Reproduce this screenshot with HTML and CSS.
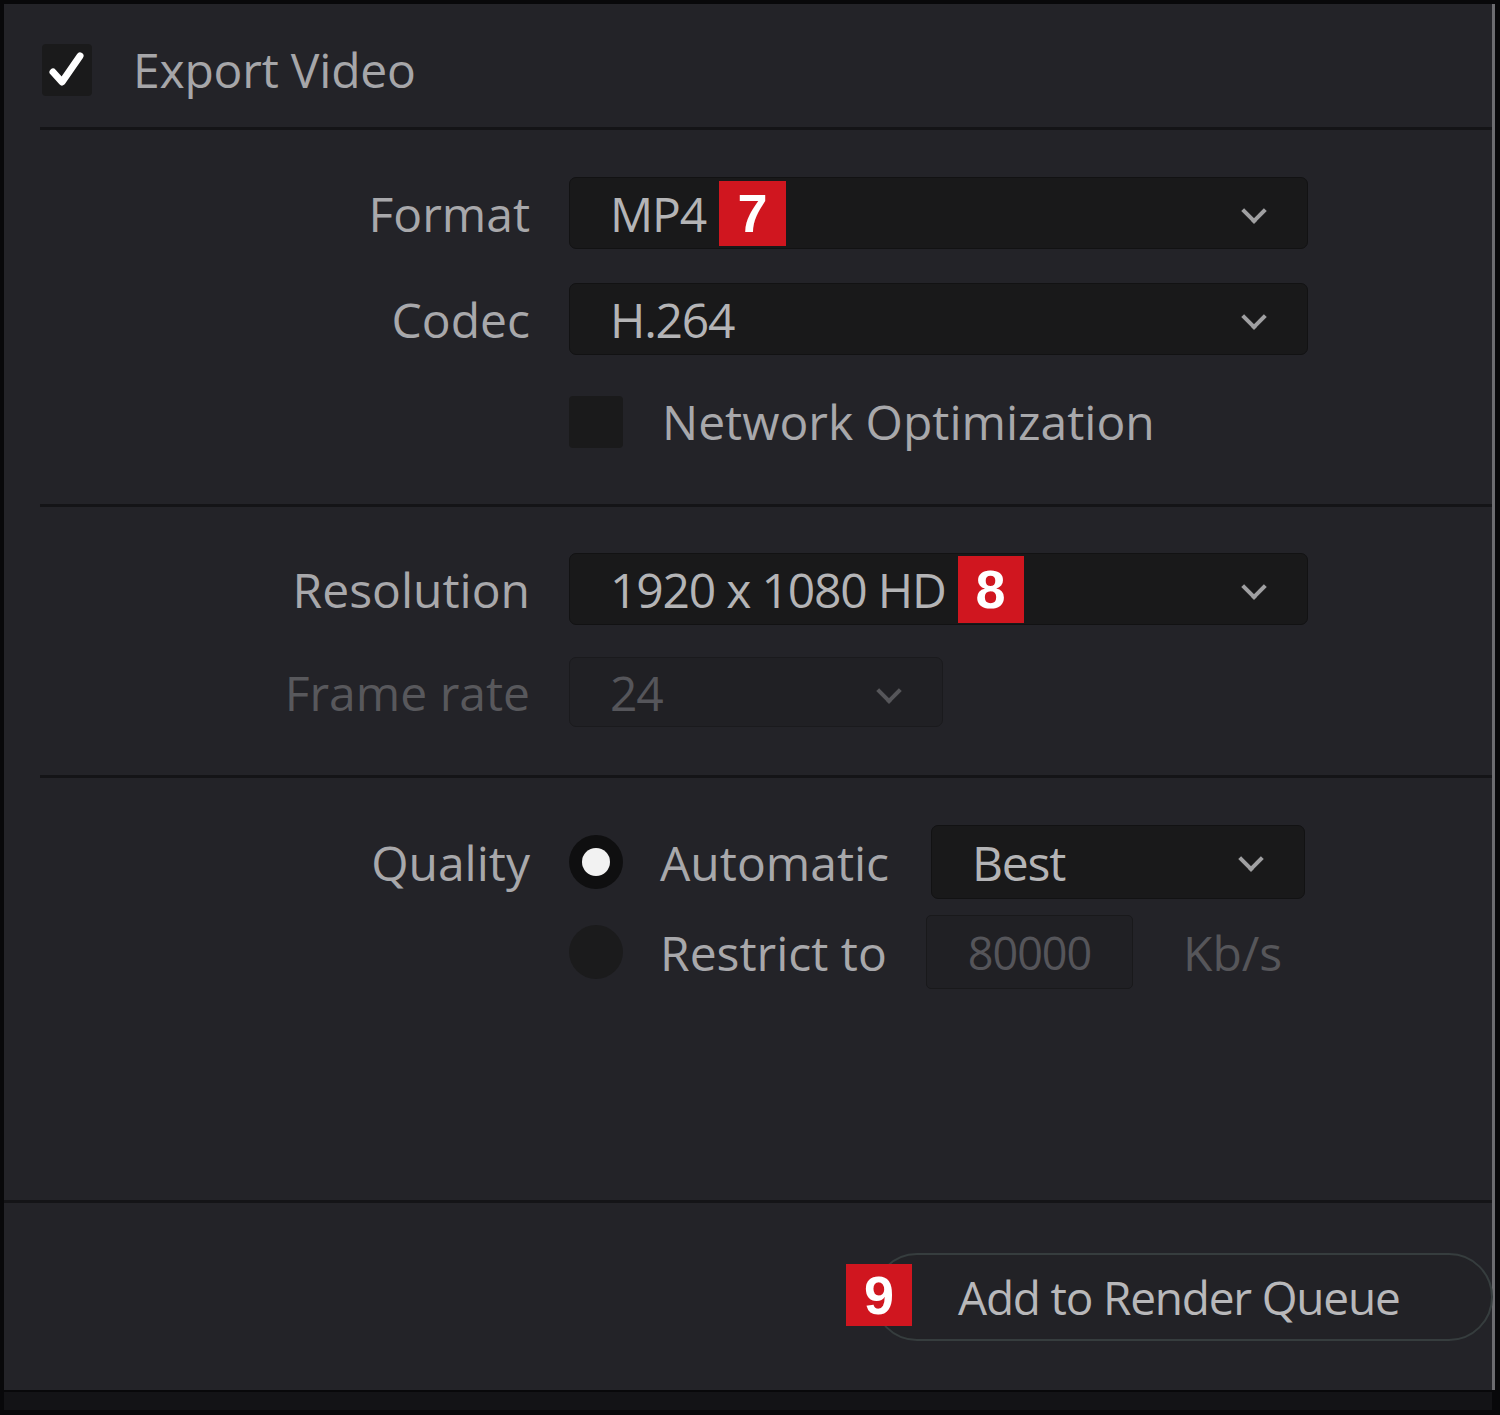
FILE: index.html
```html
<!DOCTYPE html>
<html>
<head>
<meta charset="utf-8">
<link rel="stylesheet" href="styles.css">
</head>
<body>
<div class="frame">
  <div class="panel">
    <div class="header">
      <span class="check on">
        <svg viewBox="0 0 50 50" width="50" height="50"><path d="M11 27 L20 37 L38 11" fill="none" stroke="#fff" stroke-width="7" stroke-linecap="round" stroke-linejoin="round"/></svg>
      </span>
      <span class="title">Export Video</span>
    </div>
    <div class="divider inset"></div>

    <div class="section s1">
      <div class="row">
        <div class="label">Format</div>
        <div class="select wide"><span class="val">MP4</span><span class="badge">7</span><span class="chev"></span></div>
      </div>
      <div class="row">
        <div class="label">Codec</div>
        <div class="select wide"><span class="val">H.264</span><span class="chev"></span></div>
      </div>
      <div class="row">
        <div class="label"></div>
        <div class="opt"><span class="check small"></span><span class="opttext">Network Optimization</span></div>
      </div>
    </div>
    <div class="divider inset"></div>

    <div class="section s2">
      <div class="row">
        <div class="label">Resolution</div>
        <div class="select wide"><span class="val">1920 x 1080 HD</span><span class="badge b8">8</span><span class="chev"></span></div>
      </div>
      <div class="row">
        <div class="label dim">Frame rate</div>
        <div class="select narrow disabled"><span class="val">24</span><span class="chev"></span></div>
      </div>
    </div>
    <div class="divider inset"></div>

    <div class="section s3">
      <div class="row">
        <div class="label">Quality</div>
        <div class="opt">
          <span class="radio on"></span><span class="opttext q">Automatic</span>
          <div class="select best"><span class="val">Best</span><span class="chev"></span></div>
        </div>
      </div>
      <div class="row">
        <div class="label"></div>
        <div class="opt">
          <span class="radio"></span><span class="opttext q">Restrict to</span>
          <div class="input">80000</div>
          <span class="unit">Kb/s</span>
        </div>
      </div>
    </div>
    <div class="divider full"></div>

    <div class="footer">
      <div class="btnwrap">
        <span class="badge b9">9</span>
        <div class="btn">Add to Render Queue</div>
      </div>
    </div>
  </div>
  <div class="bottomstrip"></div>
</div>
</body>
</html>
```

FILE: styles.css
```css
html, body {
  margin: 0;
  padding: 0;
  background: #08080a;
}
body {
  width: 1500px;
  height: 1415px;
  overflow: hidden;
  font-family: "Open Sans", "Noto Sans", sans-serif;
}
.frame {
  padding: 4px 0 0 4px;
  width: 1496px;
}
.panel {
  width: 1488px;
  height: 1386px;
  background: #232328;
  border-right: 3px solid #6c6c70;
  display: flex;
  flex-direction: column;
}
.bottomstrip {
  width: 1488px;
  height: 18px;
  margin-top: 2px;
  background: #131316;
}
.header {
  height: 123px;
  display: flex;
  align-items: center;
  padding-left: 38px;
  box-sizing: border-box;
  padding-top: 8px;
}
.check {
  display: inline-flex;
  width: 50px;
  height: 52px;
  background: #1a1a1b;
  border-radius: 4px;
  align-items: center;
  justify-content: center;
  flex: none;
}
.title {
  margin-left: 41px;
  font-size: 48px;
  color: #a6a6a9;
  letter-spacing: -0.2px;
}
.divider {
  height: 3px;
  background: #141417;
  flex: none;
}
.divider.inset { margin-left: 36px; }
.divider.full { margin-left: 0; }

.section {
  display: flex;
  flex-direction: column;
  box-sizing: border-box;
}
.s1 { height: 374px; padding-top: 47px; gap: 34px; }
.s2 { height: 268px; padding-top: 46px; gap: 32px; }
.s3 { height: 422px; padding-top: 47px; gap: 16px; }

.row {
  display: flex;
  align-items: center;
}
.label {
  width: 526px;
  flex: none;
  text-align: right;
  font-size: 48px;
  color: #a8a8ab;
  letter-spacing: 0;
  margin-right: 39px;
}
.label.dim { color: #58585c; }

.select {
  height: 72px;
  background: #19191a;
  border-radius: 7px;
  border: 1px solid #121213;
  box-sizing: border-box;
  display: flex;
  align-items: center;
  padding-left: 40px;
  position: relative;
}
.select.wide { width: 739px; }
.select.narrow { width: 374px; height: 70px; }
.select.disabled {
  background: #202024;
  border: 1px solid #1a1a1d;
}
.select.disabled .val { color: #55555a; }
.select.best { width: 374px; height: 74px; margin-left: 40px; padding-left: 40px; }
.val {
  font-size: 48px;
  color: #b4b4b6;
  letter-spacing: -1.2px;
}
.chev {
  position: absolute;
  right: 44px;
  top: 24px;
  width: 14px;
  height: 14px;
  border-right: 4px solid #a0a0a2;
  border-bottom: 4px solid #a0a0a2;
  transform: rotate(45deg);
  transform-origin: center;
}
.select.disabled .chev { border-color: #56565a; right: 44px; }

.badge {
  display: inline-flex;
  align-items: center;
  justify-content: center;
  width: 67px;
  height: 65px;
  background: #d0161f;
  color: #fff;
  font-family: "Liberation Sans", Arial, sans-serif;
  font-weight: bold;
  font-size: 54px;
  margin-left: 13px;
}
.badge.b8 { margin-left: 12px; height: 67px; width: 66px; }

.opt {
  display: flex;
  align-items: center;
}
.check.small {
  width: 54px;
  height: 52px;
}
.opttext {
  margin-left: 39px;
  font-size: 48px;
  color: #a8a8ab;
  letter-spacing: 0;
}
.opttext.q { width: 231px; margin-left: 37px; }
.radio {
  width: 54px;
  height: 54px;
  border-radius: 50%;
  background: #1b1b1c;
  box-sizing: border-box;
  flex: none;
  position: relative;
}
.radio.on {
  background: #0f0f10;
}
.radio.on::after {
  content: "";
  position: absolute;
  left: 13px;
  top: 13px;
  width: 28px;
  height: 28px;
  border-radius: 50%;
  background: #f2f2f2;
}
.input {
  width: 207px;
  height: 74px;
  margin-left: 35px;
  background: #202024;
  border: 1px solid #19191b;
  border-radius: 5px;
  box-sizing: border-box;
  display: flex;
  align-items: center;
  justify-content: center;
  font-size: 45px;
  color: #55555a;
  letter-spacing: -1px;
}
.unit {
  margin-left: 50px;
  font-size: 48px;
  color: #56565a;
  letter-spacing: 0;
}

.footer {
  flex: 1;
  display: flex;
  justify-content: flex-end;
  align-items: flex-start;
  padding-top: 50px;
}
.btnwrap {
  display: flex;
  align-items: center;
  position: relative;
  margin-right: -1px;
}
.btn {
  width: 620px;
  height: 88px;
  border: 2px solid #363d3e;
  border-radius: 44px;
  box-sizing: border-box;
  display: flex;
  align-items: center;
  padding-left: 83px;
  font-size: 46px;
  color: #b8b8ba;
  letter-spacing: -1.2px;
  background: #222226;
}
.badge.b9 {
  position: absolute;
  left: -27px;
  top: 11px;
  width: 66px;
  height: 62px;
  margin: 0;
  z-index: 1;
}
```
